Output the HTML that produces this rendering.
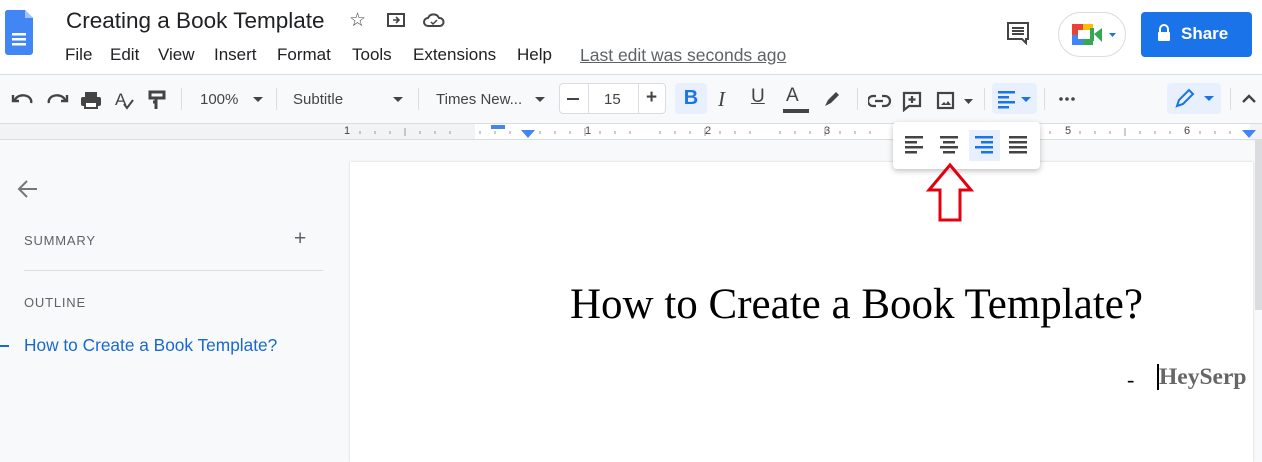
<!DOCTYPE html><html><head><style>
*{margin:0;padding:0;box-sizing:border-box}
body{width:1262px;height:456px;overflow:hidden;background:#f8f9fa;font-family:"Liberation Sans",Arial,sans-serif;position:relative;color:#444}
.a{position:absolute}
.top{left:0;top:0;width:1262px;height:75px;background:#fff;border-bottom:1px solid #dadce0}
.m{position:absolute;top:45px;font-size:17px;color:#202124;white-space:nowrap}
.sep{position:absolute;top:88px;width:1px;height:22px;background:#dadce0}
</style></head><body>
<div class="a top"></div>
<svg class="a" style="left:5px;top:10px" width="28" height="46" viewBox="0 0 28 46"><path d="M2 0h18l8 8v34a3 3 0 0 1-3 3H3a3 3 0 0 1-3-3V3a3 3 0 0 1 2-3z" fill="#4285f4"/><path d="M20 0v8h8z" fill="#a1c2fa"/><rect x="7" y="23" width="14" height="2.5" fill="#fff"/><rect x="7" y="28" width="14" height="2.5" fill="#fff"/><rect x="7" y="33" width="14" height="2.5" fill="#fff"/></svg>
<div class="a" style="left:66px;top:8px;font-size:22.5px;color:#202124">Creating a Book Template</div>
<div class="a" style="left:349px;top:9px;font-size:19px;color:#444">☆</div>
<svg class="a" style="left:387px;top:12px" width="18" height="16"><rect x="1" y="2" width="16" height="12" fill="none" stroke="#444" stroke-width="2"/><path d="M6 8h6M9 5l3 3-3 3" stroke="#444" stroke-width="1.6" fill="none"/></svg>
<svg class="a" style="left:423px;top:12px" width="22" height="16"><path d="M5 14a4 4 0 0 1 0-8 6 6 0 0 1 11 0 4 4 0 0 1 1 8z" fill="none" stroke="#444" stroke-width="2"/><path d="M8 10l2 2 4-4" stroke="#444" stroke-width="1.5" fill="none"/></svg>
<div class="m" style="left:65px">File</div><div class="m" style="left:110px">Edit</div><div class="m" style="left:158px">View</div><div class="m" style="left:214px">Insert</div><div class="m" style="left:277px">Format</div><div class="m" style="left:352px">Tools</div><div class="m" style="left:413px">Extensions</div><div class="m" style="left:517px">Help</div>
<div class="a" style="left:580px;top:45px;font-size:17.5px;color:#5f6368;text-decoration:underline">Last edit was seconds ago</div>
<svg class="a" style="left:1006px;top:21px" width="24" height="24"><path d="M2 2h20v16h-2v4l-4-4H2z" fill="none" stroke="#444" stroke-width="2"/><path d="M6 7h12M6 10h12M6 13h12" stroke="#444" stroke-width="2"/></svg>
<div class="a" style="left:1058px;top:12px;width:68px;height:45px;border:1px solid #dadce0;border-radius:23px;background:#fff"></div>
<svg class="a" style="left:1072px;top:22px" width="44" height="26"><rect x="0" y="2" width="11" height="11" fill="#ea4335"/><rect x="0" y="13" width="11" height="10" fill="#4285f4"/><rect x="11" y="2" width="10" height="6" fill="#fbbc04"/><rect x="11" y="17" width="10" height="6" fill="#34a853"/><rect x="18" y="6" width="4" height="13" fill="#34a853"/><path d="M22 12l8-6v14z" fill="#34a853"/><rect x="6" y="8" width="10" height="9" fill="#fff"/><path d="M37 11h7l-3.5 4z" fill="#1a73e8"/></svg>
<div class="a" style="left:1141px;top:12px;width:111px;height:45px;background:#1a73e8;border-radius:4px;color:#fff;font-size:17px;font-weight:bold;line-height:43px;padding-left:40px">Share</div>
<svg class="a" style="left:1157px;top:24px" width="14" height="18"><path d="M3 8V5a4 4 0 0 1 8 0v3" stroke="#fff" stroke-width="2" fill="none"/><rect x="1" y="8" width="12" height="9" rx="1" fill="#fff"/></svg>
<!-- ruler -->
<div class="a" style="left:0;top:123px;width:1262px;height:17px;background:#f1f3f4;border-top:1px solid #dadce0;border-bottom:1px solid #dadce0"></div>
<div class="a" style="left:475px;top:124px;width:775px;height:15px;background:#fff"></div>
<svg class="a" style="left:340px;top:124px" width="922" height="15"><g stroke="#999" stroke-width="1">
<path d="M20 7v3M35 7v3M50 7v3M65 4v8M80 7v3M95 7v3M110 7v3M140 7v3M155 7v3M170 7v3M200 7v3M215 7v3M230 7v3M245 4v8M260 7v3M275 7v3M290 7v3M320 7v3M335 7v3M350 7v3M365 4v8M380 7v3M395 7v3M410 7v3M440 7v3M455 7v3M470 7v3M485 4v8M500 7v3M515 7v3M530 7v3M680 7v3M695 7v3M710 7v3M740 7v3M755 7v3M770 7v3M785 4v8M800 7v3M815 7v3M830 7v3M860 7v3M875 7v3M890 7v3"/></g></svg>
<div class="a" style="left:344px;top:125px;font-size:11px;color:#444;white-space:nowrap">1</div>
<div class="a" style="left:585px;top:125px;font-size:11px;color:#444">1</div>
<div class="a" style="left:705px;top:125px;font-size:11px;color:#444">2</div>
<div class="a" style="left:824px;top:125px;font-size:11px;color:#444">3</div>
<div class="a" style="left:1065px;top:125px;font-size:11px;color:#444">5</div>
<div class="a" style="left:1184px;top:125px;font-size:11px;color:#444">6</div>
<div class="a" style="left:491px;top:125px;width:14px;height:4px;background:#4285f4"></div>
<svg class="a" style="left:521px;top:130px" width="14" height="8"><path d="M0 0h14L7 8z" fill="#4285f4"/></svg>
<svg class="a" style="left:1242px;top:130px" width="14" height="8"><path d="M0 0h14L7 8z" fill="#4285f4"/></svg>
<!-- toolbar -->
<svg class="a" style="left:10px;top:89px" width="160" height="22"><g fill="none" stroke="#444" stroke-width="2.4"><path d="M5 11a8 6 0 0 1 16 3M3 6v6h6"/><path d="M55 11a8 6 0 0 0-16 3M57 6v6h-6"/></g><rect x="71" y="8" width="20" height="9" rx="2" fill="#444"/><rect x="75" y="3" width="12" height="5" fill="#444"/><rect x="75" y="13" width="12" height="6" fill="#fff" stroke="#444" stroke-width="2"/><text x="105" y="16" font-size="17" fill="#444" font-family="Liberation Sans">A</text><path d="M114 15l3 4 6-8" stroke="#444" stroke-width="2" fill="none"/><path d="M140 3h14v6h-14zM146 9v4h-3M146 13v7" stroke="#444" stroke-width="3" fill="none"/></svg>
<div class="sep" style="left:181px"></div>
<div class="a" style="left:200px;top:91px;font-size:15px;color:#444">100%</div>
<svg class="a" style="left:253px;top:97px" width="10" height="6"><path d="M0 0h10L5 5z" fill="#444"/></svg>
<div class="sep" style="left:276px"></div>
<div class="a" style="left:293px;top:91px;font-size:15px;color:#444">Subtitle</div>
<svg class="a" style="left:393px;top:97px" width="10" height="6"><path d="M0 0h10L5 5z" fill="#444"/></svg>
<div class="sep" style="left:418px"></div>
<div class="a" style="left:436px;top:91px;font-size:15px;color:#444">Times New...</div>
<svg class="a" style="left:535px;top:97px" width="10" height="6"><path d="M0 0h10L5 5z" fill="#444"/></svg>
<div class="a" style="left:559px;top:83px;width:107px;height:31px;border:1px solid #dadce0;border-radius:4px;background:#fff"></div>
<div class="a" style="left:588px;top:83px;width:1px;height:31px;background:#dadce0"></div>
<div class="a" style="left:638px;top:83px;width:1px;height:31px;background:#dadce0"></div>
<div class="a" style="left:567px;top:98px;width:12px;height:2px;background:#444"></div>
<div class="a" style="left:604px;top:91px;font-size:15px;color:#444">15</div>
<div class="a" style="left:646px;top:87px;font-size:19px;font-weight:bold;color:#444">+</div>
<div class="a" style="left:675px;top:83px;width:32px;height:31px;background:#e8f0fe;border-radius:4px;color:#1a73e8;font-size:20px;font-weight:bold;text-align:center;line-height:31px">B</div>
<div class="a" style="left:718px;top:87px;font-size:21px;font-style:italic;font-family:'Liberation Serif';color:#444">I</div>
<div class="a" style="left:751px;top:86px;font-size:19px;color:#444;text-decoration:underline">U</div>
<div class="a" style="left:786px;top:85px;font-size:19px;color:#444">A</div>
<div class="a" style="left:783px;top:109px;width:26px;height:4px;background:#444"></div>
<svg class="a" style="left:822px;top:89px" width="20" height="20"><path d="M3 17l3-6 8-8 3 3-8 8z" fill="#444"/></svg>
<div class="sep" style="left:857px"></div>
<svg class="a" style="left:868px;top:90px" width="160" height="22"><g fill="none" stroke="#444" stroke-width="2.2"><path d="M8 6H5a5 5 0 0 0 0 10h3M14 6h3a5 5 0 0 1 0 10h-3M7 11h8"/><path d="M36 3h16v13H41l-5 4z"/><path d="M44 6v7M40.5 9.5h7"/><rect x="70" y="3" width="15" height="15"/></g><path d="M73 15l3-3 2 2 2-3 3 4z" fill="#444"/><path d="M96 9h9l-4.5 5z" fill="#444"/></svg>
<div class="sep" style="left:984px"></div>
<div class="a" style="left:992px;top:83px;width:45px;height:31px;background:#e8f0fe;border-radius:4px"></div>
<svg class="a" style="left:998px;top:89px" width="36" height="20"><g fill="#1a73e8"><rect x="0" y="2" width="17" height="2.5"/><rect x="0" y="7" width="11" height="2.5"/><rect x="0" y="12" width="17" height="2.5"/><rect x="0" y="17" width="11" height="2.5"/><path d="M23 8h10l-5 5z"/></g></svg>
<div class="sep" style="left:1044px"></div>
<svg class="a" style="left:1058px;top:96px" width="20" height="6"><circle cx="3" cy="3" r="1.8" fill="#444"/><circle cx="9" cy="3" r="1.8" fill="#444"/><circle cx="15" cy="3" r="1.8" fill="#444"/></svg>
<div class="a" style="left:1167px;top:83px;width:54px;height:31px;background:#e8f0fe;border-radius:4px"></div>
<svg class="a" style="left:1174px;top:88px" width="42" height="22"><path d="M3 18l2-6 10-10 4 4-10 10z" fill="none" stroke="#1a73e8" stroke-width="2"/><path d="M30 8h10l-5 5z" fill="#1a73e8"/></svg>
<div class="sep" style="left:1230px"></div>
<svg class="a" style="left:1241px;top:92px" width="16" height="12"><path d="M2 10l6-6 6 6" stroke="#444" stroke-width="2.4" fill="none"/></svg>
<!-- left panel -->
<svg class="a" style="left:17px;top:179px" width="22" height="20"><path d="M20 10H3M10 2l-8 8 8 8" stroke="#777" stroke-width="2" fill="none"/></svg>
<div class="a" style="left:24px;top:233px;font-size:13px;color:#5f6368;letter-spacing:.8px">SUMMARY</div>
<div class="a" style="left:294px;top:227px;font-size:21px;color:#5f6368">+</div>
<div class="a" style="left:24px;top:270px;width:299px;height:1px;background:#dadce0"></div>
<div class="a" style="left:24px;top:295px;font-size:13px;color:#5f6368;letter-spacing:.8px">OUTLINE</div>
<div class="a" style="left:0;top:345px;width:9px;height:2px;background:#1967d2"></div>
<div class="a" style="left:24px;top:335px;font-size:17.3px;color:#1967d2">How to Create a Book Template?</div>
<!-- page -->
<div class="a" style="left:350px;top:162px;width:903px;height:300px;background:#fff;box-shadow:0 0 2px #ccc"></div>
<div class="a" style="left:1255px;top:140px;width:7px;height:170px;background:#dadce0"></div>
<div class="a" style="left:570px;top:280px;font-size:43px;font-family:'Liberation Serif',serif;color:#000;white-space:nowrap">How to Create a Book Template?</div>
<div class="a" style="left:1127px;top:367px;font-size:22px;font-family:'Liberation Serif',serif;color:#000">-</div>
<div class="a" style="left:1157px;top:364px;width:2px;height:26px;background:#000"></div>
<div class="a" style="left:1159px;top:364px;font-size:23.5px;font-weight:bold;font-family:'Liberation Serif',serif;color:#666">HeySerp</div>
<!-- align popup -->
<div class="a" style="left:893px;top:122px;width:147px;height:47px;background:#fff;border-radius:4px;box-shadow:0 2px 6px rgba(0,0,0,.25)"></div>
<div class="a" style="left:969px;top:130px;width:31px;height:31px;background:#e8f0fe"></div>
<svg class="a" style="left:905px;top:136px" width="125" height="20"><g fill="#444"><rect x="0" y="0" width="18" height="2.5"/><rect x="0" y="5" width="12" height="2.5"/><rect x="0" y="10" width="18" height="2.5"/><rect x="0" y="15" width="12" height="2.5"/><rect x="35" y="0" width="18" height="2.5"/><rect x="38" y="5" width="12" height="2.5"/><rect x="35" y="10" width="18" height="2.5"/><rect x="38" y="15" width="12" height="2.5"/><rect x="104" y="0" width="18" height="2.5"/><rect x="104" y="5" width="18" height="2.5"/><rect x="104" y="10" width="18" height="2.5"/><rect x="104" y="15" width="18" height="2.5"/></g><g fill="#1a73e8"><rect x="70" y="0" width="18" height="2.5"/><rect x="76" y="5" width="12" height="2.5"/><rect x="70" y="10" width="18" height="2.5"/><rect x="76" y="15" width="12" height="2.5"/></g></svg>
<svg class="a" style="left:925px;top:162px" width="52" height="62"><path d="M25 3L4 28h11v30h20V28h11z" fill="none" stroke="#e3000f" stroke-width="3"/></svg>
</body></html>
